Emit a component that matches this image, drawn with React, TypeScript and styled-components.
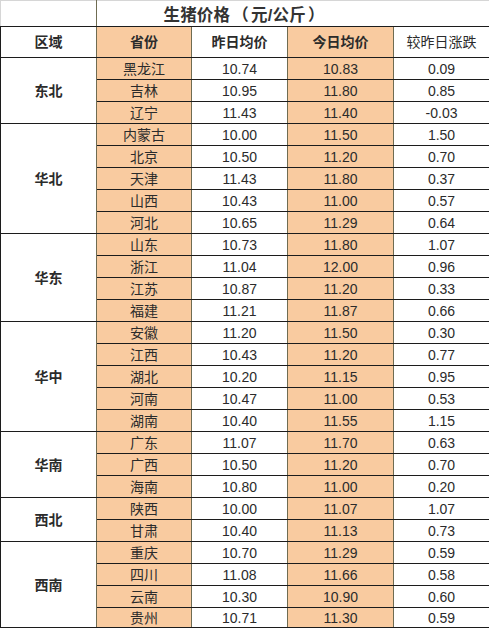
import React from "react";
import styled, { createGlobalStyle } from "styled-components";

const orange = "#f9cba0";
const gridLine = "#1c1c1c";
const colLine = "#6f6c52";

const GlobalStyle = createGlobalStyle`
  html, body {
    margin: 0;
    padding: 0;
    background: #fff;
  }
  body {
    font-family: "Liberation Sans", "Noto Sans CJK SC", sans-serif;
    color: #2b2b2b;
  }
`;

const Table = styled.table`
  width: 489px;
  border-collapse: collapse;
  table-layout: fixed;
  font-size: 14px;
`;

const TitleRow = styled.tr`
  height: 26px;
`;

const HeadRow = styled.tr`
  height: 31px;
`;

const Row = styled.tr<{ $short?: boolean }>`
  height: ${(p) => (p.$short ? "20px" : "22px")};
`;

const TitleBlank = styled.td`
  border-top: 1px solid #d6d6d6;
  border-left: 1px solid #d6d6d6;
  border-right: 1px solid ${colLine};
  border-bottom: 1px solid ${gridLine};
  padding: 0;
`;

const TitleCell = styled.td`
  border-top: 1px solid #d6d6d6;
  border-right: 1px solid ${gridLine};
  border-bottom: 1px solid ${gridLine};
  padding: 0 96px 0 0;
  text-align: center;
  font-size: 16.5px;
  font-weight: bold;
  color: #333;
  letter-spacing: 0.2px;
`;

const Paren = styled.span`
  padding: 0 2px;
`;

const Cell = styled.td<{ $fill?: boolean; $bold?: boolean }>`
  border: 1px solid ${gridLine};
  border-left-color: ${colLine};
  border-right-color: ${colLine};
  background: ${(p) => (p.$fill ? orange : "#fff")};
  font-weight: ${(p) => (p.$bold ? "bold" : "normal")};
  text-align: center;
  vertical-align: middle;
  padding: 0;
  line-height: 18px;
  white-space: nowrap;
`;

const EdgeCell = styled(Cell)`
  border-left-color: ${gridLine};
`;

const LastCell = styled(Cell)`
  border-right-color: ${gridLine};
`;

type Prov = [string, string, string, string];

const groups: { region: string; rows: Prov[] }[] = [
  {
    region: "东北",
    rows: [
      ["黑龙江", "10.74", "10.83", "0.09"],
      ["吉林", "10.95", "11.80", "0.85"],
      ["辽宁", "11.43", "11.40", "-0.03"],
    ],
  },
  {
    region: "华北",
    rows: [
      ["内蒙古", "10.00", "11.50", "1.50"],
      ["北京", "10.50", "11.20", "0.70"],
      ["天津", "11.43", "11.80", "0.37"],
      ["山西", "10.43", "11.00", "0.57"],
      ["河北", "10.65", "11.29", "0.64"],
    ],
  },
  {
    region: "华东",
    rows: [
      ["山东", "10.73", "11.80", "1.07"],
      ["浙江", "11.04", "12.00", "0.96"],
      ["江苏", "10.87", "11.20", "0.33"],
      ["福建", "11.21", "11.87", "0.66"],
    ],
  },
  {
    region: "华中",
    rows: [
      ["安徽", "11.20", "11.50", "0.30"],
      ["江西", "10.43", "11.20", "0.77"],
      ["湖北", "10.20", "11.15", "0.95"],
      ["河南", "10.47", "11.00", "0.53"],
      ["湖南", "10.40", "11.55", "1.15"],
    ],
  },
  {
    region: "华南",
    rows: [
      ["广东", "11.07", "11.70", "0.63"],
      ["广西", "10.50", "11.20", "0.70"],
      ["海南", "10.80", "11.00", "0.20"],
    ],
  },
  {
    region: "西北",
    rows: [
      ["陕西", "10.00", "11.07", "1.07"],
      ["甘肃", "10.40", "11.13", "0.73"],
    ],
  },
  {
    region: "西南",
    rows: [
      ["重庆", "10.70", "11.29", "0.59"],
      ["四川", "11.08", "11.66", "0.58"],
      ["云南", "10.30", "10.90", "0.60"],
      ["贵州", "10.71", "11.30", "0.59"],
    ],
  },
];

const App = () => {
  const lastGroup = groups.length - 1;
  return (
    <>
      <GlobalStyle />
      <Table>
        <colgroup>
          <col style={{ width: 96 }} />
          <col style={{ width: 95 }} />
          <col style={{ width: 96 }} />
          <col style={{ width: 106 }} />
          <col style={{ width: 96 }} />
        </colgroup>
        <tbody>
          <TitleRow>
            <TitleBlank />
            <TitleCell colSpan={4}>
              生猪价格<Paren>（</Paren>元/公斤<Paren>）</Paren>
            </TitleCell>
          </TitleRow>
          <HeadRow>
            <EdgeCell $bold>区域</EdgeCell>
            <Cell $fill $bold>省份</Cell>
            <Cell $bold>昨日均价</Cell>
            <Cell $fill $bold>今日均价</Cell>
            <LastCell>较昨日涨跌</LastCell>
          </HeadRow>
          {groups.map((g, gi) =>
            g.rows.map((r, ri) => (
              <Row
                key={r[0]}
                $short={gi === lastGroup && ri === g.rows.length - 1}
              >
                {ri === 0 && (
                  <EdgeCell $bold rowSpan={g.rows.length}>
                    {g.region}
                  </EdgeCell>
                )}
                <Cell $fill>{r[0]}</Cell>
                <Cell>{r[1]}</Cell>
                <Cell $fill>{r[2]}</Cell>
                <LastCell>{r[3]}</LastCell>
              </Row>
            ))
          )}
        </tbody>
      </Table>
    </>
  );
};

export default App;
